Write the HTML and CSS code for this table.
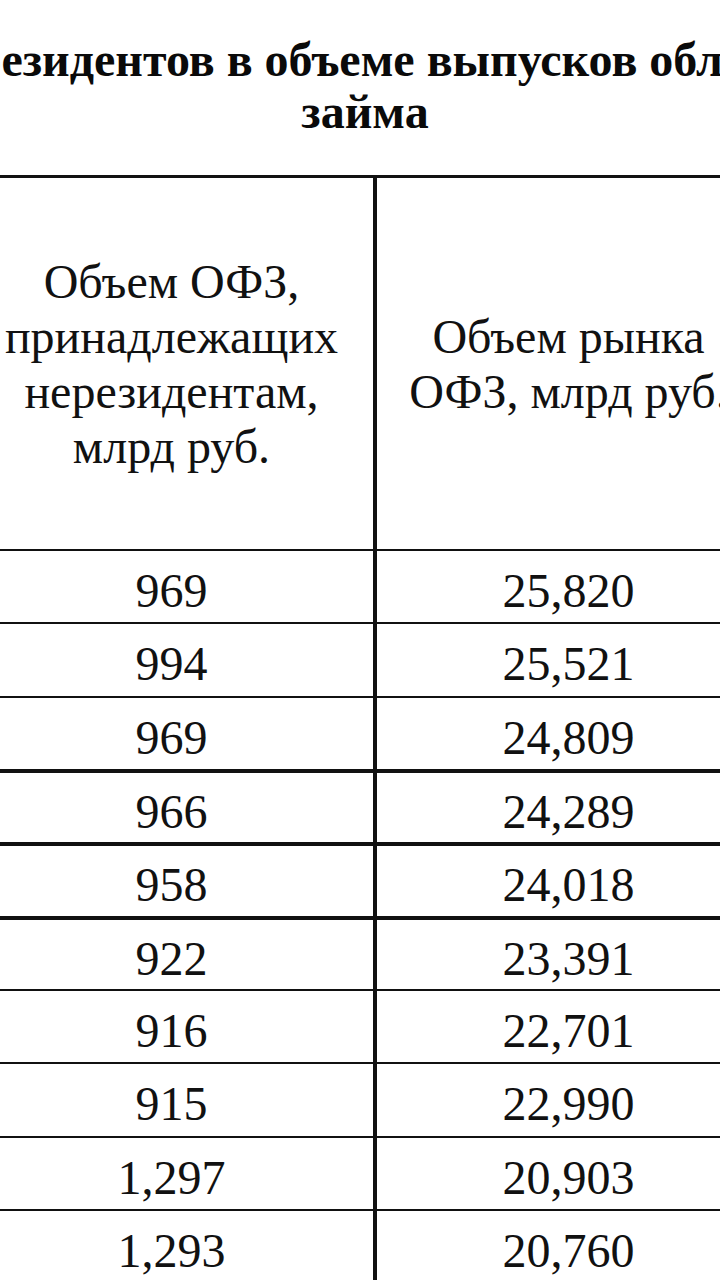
FILE: index.html
```html
<!DOCTYPE html>
<html lang="ru">
<head>
<meta charset="utf-8">
<title>Доля нерезидентов</title>
<link rel="stylesheet" href="styles.css">
</head>
<body>
<div class="sheet">
  <h1 class="title">
    <span class="title-line title-first">Доля нерезидентов в объеме выпусков облигаций</span>
    <span class="title-line">займа</span>
  </h1>
  <table class="data">
    <thead>
      <tr>
        <th class="col-a"><span class="head-text">Объем ОФЗ,<br>принадлежащих<br>нерезидентам,<br>млрд руб.</span></th>
        <th class="col-b"><span class="head-text">Объем рынка<br>ОФЗ, млрд руб.</span></th>
      </tr>
    </thead>
    <tbody>
      <tr><td class="col-a">969</td><td class="col-b">25,820</td></tr>
      <tr><td class="col-a">994</td><td class="col-b">25,521</td></tr>
      <tr><td class="col-a">969</td><td class="col-b">24,809</td></tr>
      <tr class="thick"><td class="col-a">966</td><td class="col-b">24,289</td></tr>
      <tr class="thick"><td class="col-a">958</td><td class="col-b">24,018</td></tr>
      <tr class="thick"><td class="col-a">922</td><td class="col-b">23,391</td></tr>
      <tr><td class="col-a">916</td><td class="col-b">22,701</td></tr>
      <tr><td class="col-a">915</td><td class="col-b">22,990</td></tr>
      <tr><td class="col-a">1,297</td><td class="col-b">20,903</td></tr>
      <tr class="last"><td class="col-a">1,293</td><td class="col-b">20,760</td></tr>
    </tbody>
  </table>
</div>
</body>
</html>
```

FILE: styles.css
```css
html, body {
  margin: 0;
  padding: 0;
  background: #ffffff;
  overflow: hidden;
}

body {
  font-family: "Liberation Serif", "Times New Roman", serif;
  color: #111111;
}

.sheet {
  width: 790px;
  margin-left: -30px;
}

.title {
  margin: 0;
  padding-top: 34px;
  height: 175px;
  box-sizing: border-box;
  display: flex;
  flex-direction: column;
  align-items: center;
  font-size: 48px;
  line-height: 52px;
  font-weight: bold;
  color: #0a0a0a;
}

.title-line {
  white-space: nowrap;
  display: block;
}

.title-first {
  margin-right: 46px;
}

.data {
  width: 790px;
  border-collapse: separate;
  border-spacing: 0;
  table-layout: fixed;
  font-size: 48px;
}

.data th,
.data td {
  padding: 0;
  text-align: center;
  vertical-align: middle;
  font-weight: normal;
  box-sizing: border-box;
}

.data .col-a {
  width: 407px;
  border-right: 4px solid #111;
}

.data th {
  height: 374px;
  border-top: 3px solid #111;
  line-height: 55px;
}

.data td {
  height: 73.33px;
  border-top: 2px solid #111;
  line-height: 53px;
  padding-top: 8px;
}

.data tr.thick td {
  border-top-width: 4px;
}

.data tr.last td {
  height: 82.33px;
  padding-bottom: 9px;
}

.head-text {
  display: inline-block;
}
```
